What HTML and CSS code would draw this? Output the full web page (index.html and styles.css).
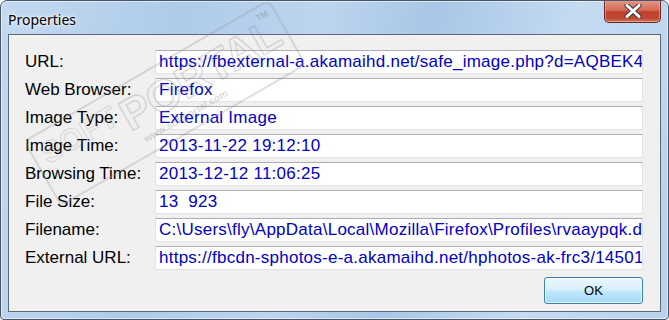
FILE: index.html
```html
<!DOCTYPE html>
<html>
<head>
<meta charset="utf-8">
<link rel="stylesheet" href="styles.css">
</head>
<body>
<div class="window">
  <div class="titlebar">
    <span class="title">Properties</span>
    <div class="close">
      <svg width="22" height="14" viewBox="0 0 22 14">
        <path d="M5 1.5 L17 12.5 M17 1.5 L5 12.5" stroke="#3a3a3a" stroke-width="5" stroke-linecap="round"/>
        <path d="M5 1.5 L17 12.5 M17 1.5 L5 12.5" stroke="#ffffff" stroke-width="3" stroke-linecap="round"/>
      </svg>
    </div>
  </div>
  <div class="client">
    <div class="grid">
      <div class="label">URL:</div><div class="field">https://fbexternal-a.akamaihd.net/safe_image.php?d=AQBEK4</div>
      <div class="label">Web Browser:</div><div class="field">Firefox</div>
      <div class="label">Image Type:</div><div class="field">External Image</div>
      <div class="label">Image Time:</div><div class="field">2013-11-22 19:12:10</div>
      <div class="label">Browsing Time:</div><div class="field">2013-12-12 11:06:25</div>
      <div class="label">File Size:</div><div class="field">13  923</div>
      <div class="label">Filename:</div><div class="field">C:\Users\fly\AppData\Local\Mozilla\Firefox\Profiles\rvaaypqk.d</div>
      <div class="label">External URL:</div><div class="field">https://fbcdn-sphotos-e-a.akamaihd.net/hphotos-ak-frc3/14501</div>
    </div>
    <div class="actions">
      <button class="ok">OK</button>
    </div>
  </div>
  <div class="stamp">
    <span class="soft">SOFT</span><span class="portal">PORTAL</span><span class="tm">TM</span>
    <span class="www">www.softportal.com</span>
  </div>
</div>
</body>
</html>
```
FILE: styles.css
```css
html, body {
  margin: 0;
  padding: 0;
  width: 669px;
  height: 320px;
  overflow: hidden;
  background: #ffffff;
}
.window {
  position: relative;
  box-sizing: border-box;
  width: 669px;
  height: 320px;
  border: 1px solid #4a5666;
  border-radius: 7px 7px 4px 4px;
  background: linear-gradient(100deg, #c2d9f0 0%, #aecbe9 25%, #bcd5ef 45%, #a8c6e6 60%, #c4dbf2 80%, #b9d2ec 100%);
  box-shadow: inset 0 0 0 1px rgba(255,255,255,0.55);
  padding: 0 7px 7px 7px;
  display: flex;
  flex-direction: column;
  overflow: hidden;
}
.titlebar {
  height: 33px;
  display: flex;
  justify-content: space-between;
  align-items: flex-start;
}
.title {
  font-family: "Noto Sans", "Open Sans", sans-serif;
  font-size: 14px;
  color: #000;
  margin-top: 9px;
  text-shadow: 0 0 6px #ffffff, 0 0 3px #ffffff;
}
.close {
  width: 57px;
  height: 23px;
  margin-top: -1px;
  box-sizing: border-box;
  border: 1px solid #6b2a22;
  border-top: none;
  border-radius: 0 0 5px 5px;
  background: linear-gradient(to bottom, #e49a8b 0%, #d56c58 45%, #c03f2b 55%, #bd4a36 85%, #d27d68 100%);
  box-shadow: inset 0 0 0 1px rgba(255,200,190,0.45);
  display: flex;
  align-items: center;
  justify-content: center;
}
.client {
  flex: 1;
  box-sizing: border-box;
  border: 1px solid #5e6a78;
  background: #f0f0f0;
  padding: 15px 17px 0 16px;
  display: flex;
  flex-direction: column;
}
.grid {
  display: grid;
  grid-template-columns: 130px 1fr;
  grid-auto-rows: 24px;
  row-gap: 4px;
}
.label {
  font-family: "Liberation Sans", Arial, sans-serif;
  font-size: 17px;
  color: #000;
  display: flex;
  align-items: center;
  white-space: nowrap;
}
.field {
  box-sizing: border-box;
  background: #fff;
  border: 1px solid #e2e3ea;
  border-top-color: #abadb3;
  font-family: "Liberation Sans", Arial, sans-serif;
  font-size: 17px;
  letter-spacing: 0.25px;
  color: #0000c8;
  padding: 0 3px;
  line-height: 22px;
  white-space: pre;
  overflow: hidden;
}
.actions {
  display: flex;
  justify-content: flex-end;
  margin-top: 7px;
}
.ok {
  width: 99px;
  height: 27px;
  box-sizing: border-box;
  border: 1px solid #3c7fb1;
  border-radius: 3px;
  background: linear-gradient(to bottom, #eaf6fd 0%, #d9f0fc 45%, #bee6fd 55%, #a7d9f5 100%);
  box-shadow: inset 0 0 0 1px rgba(255,255,255,0.7);
  font-family: "Liberation Sans", Arial, sans-serif;
  font-size: 13px;
  color: #000;
  padding: 0;
}
.stamp {
  position: absolute;
  left: 22px;
  top: 140px;
  width: 280px;
  height: 72px;
  border: 2px solid rgba(150,150,150,0.3);
  border-radius: 8px;
  transform: rotate(-30deg);
  transform-origin: left top;
  pointer-events: none;
  font-family: "Liberation Sans", Arial, sans-serif;
  font-weight: bold;
}
.soft {
  position: absolute;
  left: 8px;
  top: 4px;
  font-size: 30px;
  color: transparent;
  -webkit-text-stroke: 1px rgba(150,150,150,0.3);
  letter-spacing: 1px;
}
.portal {
  position: absolute;
  left: 96px;
  top: 4px;
  font-size: 44px;
  color: transparent;
  -webkit-text-stroke: 1.5px rgba(140,140,140,0.3);
}
.tm {
  position: absolute;
  right: 6px;
  top: 4px;
  font-size: 9px;
  color: rgba(120,120,120,0.35);
}
.www {
  position: absolute;
  left: 104px;
  top: 52px;
  font-size: 10px;
  color: rgba(130,130,130,0.3);
}
```
